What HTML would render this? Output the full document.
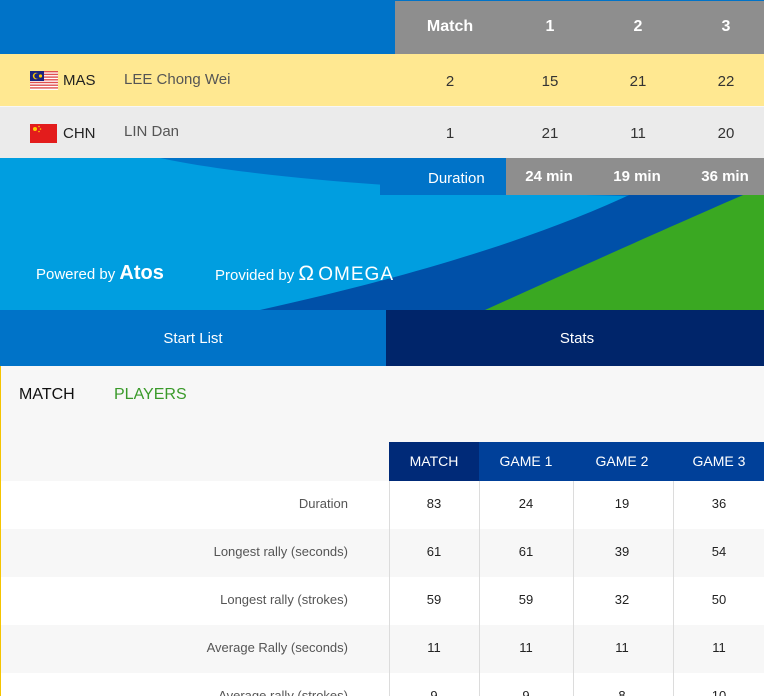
<!DOCTYPE html>
<html style="width:764px;height:696px;overflow:hidden"><head><meta charset="utf-8"><style>
*{margin:0;padding:0;box-sizing:border-box}
body{width:764px;height:696px;overflow:hidden;background:#f7f7f7;font-family:"Liberation Sans",sans-serif;position:relative}
.abs{position:absolute}
.c{position:absolute;text-align:center;transform:translateX(-50%);white-space:nowrap}
</style></head><body>
<div class="abs" style="left:0;top:0;width:764px;height:54px;background:#0073c8"></div>
<div class="abs" style="left:395px;top:1px;width:369px;height:53px;background:#8e8e8e"></div>
<div class="c" style="left:450px;top:18px;color:#fff;font-size:16px;font-weight:bold">Match</div>
<div class="c" style="left:550px;top:18px;color:#fff;font-size:16px;font-weight:bold">1</div>
<div class="c" style="left:638px;top:18px;color:#fff;font-size:16px;font-weight:bold">2</div>
<div class="c" style="left:726px;top:18px;color:#fff;font-size:16px;font-weight:bold">3</div>

<div class="abs" style="left:0;top:54px;width:764px;height:52px;background:#ffe891"></div>
<div class="abs" style="left:0;top:107px;width:764px;height:51px;background:#ebebeb"></div>
<svg class="abs" style="left:30px;top:71px" width="28" height="19" viewBox="0 0 28 19">
<rect width="28" height="19" fill="#fff"/>
<g fill="#e05050"><rect y="0" width="28" height="1.4"/><rect y="2.7" width="28" height="1.4"/><rect y="5.4" width="28" height="1.4"/><rect y="8.1" width="28" height="1.4"/><rect y="10.8" width="28" height="1.4"/><rect y="13.5" width="28" height="1.4"/><rect y="16.2" width="28" height="1.4"/></g>
<rect width="14" height="10" fill="#1a237e"/><circle cx="6" cy="5" r="3.2" fill="#fc0"/><circle cx="7" cy="5" r="2.7" fill="#1a237e"/><circle cx="10.5" cy="5" r="1.6" fill="#fc0"/></svg>
<div class="abs" style="left:63px;top:72px;font-size:15px;color:#222">MAS</div>
<div class="abs" style="left:124px;top:71px;font-size:15px;color:#555">LEE Chong Wei</div>
<svg class="abs" style="left:30px;top:124px" width="27" height="19"><rect width="27" height="19" fill="#e31c1c"/><circle cx="5" cy="5" r="2" fill="#fc0"/><circle cx="9" cy="2.5" r=".8" fill="#fc0"/><circle cx="10.5" cy="5" r=".8" fill="#fc0"/><circle cx="9" cy="7.5" r=".8" fill="#fc0"/></svg>
<div class="abs" style="left:63px;top:125px;font-size:15px;color:#222">CHN</div>
<div class="abs" style="left:124px;top:123px;font-size:15px;color:#555">LIN Dan</div>
<div class="c" style="left:450px;top:73px;font-size:15px;color:#333">2</div>
<div class="c" style="left:550px;top:73px;font-size:15px;color:#333">15</div>
<div class="c" style="left:638px;top:73px;font-size:15px;color:#333">21</div>
<div class="c" style="left:726px;top:73px;font-size:15px;color:#333">22</div>
<div class="c" style="left:450px;top:125px;font-size:15px;color:#333">1</div>
<div class="c" style="left:550px;top:125px;font-size:15px;color:#333">21</div>
<div class="c" style="left:638px;top:125px;font-size:15px;color:#333">11</div>
<div class="c" style="left:726px;top:125px;font-size:15px;color:#333">20</div>

<svg class="abs" style="left:0;top:158px" width="764" height="152" viewBox="0 0 764 152">
<rect width="764" height="152" fill="#009ee0"/>
<path d="M160 0 C300 30 600 40 764 40 L764 0Z" fill="#0073c8"/>
<path d="M260 152 C450 110 600 60 700 0 L764 0 L764 152Z" fill="#0050a8"/>
<path d="M485 152 C600 100 690 60 764 28 L764 152Z" fill="#3aa822"/>
</svg>
<div class="abs" style="left:380px;top:158px;width:126px;height:37px;background:#0073c8"></div>
<div class="abs" style="left:506px;top:158px;width:258px;height:37px;background:#8e8e8e"></div>
<div class="abs" style="left:428px;top:170px;font-size:15px;color:#fff">Duration</div>
<div class="c" style="left:549px;top:168px;font-size:15px;color:#fff;font-weight:bold">24 min</div>
<div class="c" style="left:637px;top:168px;font-size:15px;color:#fff;font-weight:bold">19 min</div>
<div class="c" style="left:725px;top:168px;font-size:15px;color:#fff;font-weight:bold">36 min</div>
<div class="abs" style="left:36px;top:262px;font-size:15px;color:#fff">Powered by <b style="font-size:20px">Atos</b></div>
<div class="abs" style="left:215px;top:262px;font-size:15px;color:#fff">Provided by <span style="font-size:21px">Ω</span> <span style="font-size:19px;letter-spacing:1px">OMEGA</span></div>

<div class="abs" style="left:0;top:310px;width:386px;height:56px;background:#0073c8"></div>
<div class="abs" style="left:386px;top:310px;width:378px;height:56px;background:#00256a"></div>
<div class="c" style="left:193px;top:330px;font-size:15px;color:#fff">Start List</div>
<div class="c" style="left:577px;top:330px;font-size:15px;color:#fff">Stats</div>
<div class="abs" style="left:0;top:366px;width:1px;height:330px;background:#f5c400"></div>
<div class="abs" style="left:19px;top:386px;font-size:16px;color:#111">MATCH</div>
<div class="abs" style="left:114px;top:386px;font-size:16px;color:#3a9a2a">PLAYERS</div>

<div class="abs" style="left:389px;top:442px;width:90px;height:39px;background:#002a78"></div>
<div class="abs" style="left:479px;top:442px;width:285px;height:39px;background:#004099"></div>
<div style="font-family:'Liberation Sans Narrow','Liberation Sans',sans-serif">
<div class="c" style="left:434px;top:453px;font-size:14px;color:#fff">MATCH</div>
<div class="c" style="left:526px;top:453px;font-size:14px;color:#fff">GAME 1</div>
<div class="c" style="left:622px;top:453px;font-size:14px;color:#fff">GAME 2</div>
<div class="c" style="left:719px;top:453px;font-size:14px;color:#fff">GAME 3</div>
</div>
<div class="abs" style="left:1px;top:481px;width:763px;height:48px;background:#fff"></div>
<div class="abs" style="left:1px;top:577px;width:763px;height:48px;background:#fff"></div>
<div class="abs" style="left:1px;top:673px;width:763px;height:23px;background:#fff"></div>
<div class="abs" style="left:389px;top:481px;width:1px;height:215px;background:#dcdcdc"></div>
<div class="abs" style="left:479px;top:481px;width:1px;height:215px;background:#dcdcdc"></div>
<div class="abs" style="left:573px;top:481px;width:1px;height:215px;background:#dcdcdc"></div>
<div class="abs" style="left:673px;top:481px;width:1px;height:215px;background:#dcdcdc"></div>
<div style="font-family:'Liberation Sans Narrow','Liberation Sans',sans-serif;font-size:13px;color:#555">
<div class="abs" style="right:416px;top:496px">Duration</div>
<div class="abs" style="right:416px;top:544px">Longest rally (seconds)</div>
<div class="abs" style="right:416px;top:592px">Longest rally (strokes)</div>
<div class="abs" style="right:416px;top:640px">Average Rally (seconds)</div>
<div class="abs" style="right:416px;top:688px">Average rally (strokes)</div>
</div>
<div style="font-family:'Liberation Sans Narrow','Liberation Sans',sans-serif;font-size:13px;color:#222">
<div class="c" style="left:434px;top:496px">83</div><div class="c" style="left:526px;top:496px">24</div><div class="c" style="left:622px;top:496px">19</div><div class="c" style="left:719px;top:496px">36</div>
<div class="c" style="left:434px;top:544px">61</div><div class="c" style="left:526px;top:544px">61</div><div class="c" style="left:622px;top:544px">39</div><div class="c" style="left:719px;top:544px">54</div>
<div class="c" style="left:434px;top:592px">59</div><div class="c" style="left:526px;top:592px">59</div><div class="c" style="left:622px;top:592px">32</div><div class="c" style="left:719px;top:592px">50</div>
<div class="c" style="left:434px;top:640px">11</div><div class="c" style="left:526px;top:640px">11</div><div class="c" style="left:622px;top:640px">11</div><div class="c" style="left:719px;top:640px">11</div>
<div class="c" style="left:434px;top:688px">9</div><div class="c" style="left:526px;top:688px">9</div><div class="c" style="left:622px;top:688px">8</div><div class="c" style="left:719px;top:688px">10</div>
</div>
</body></html>
